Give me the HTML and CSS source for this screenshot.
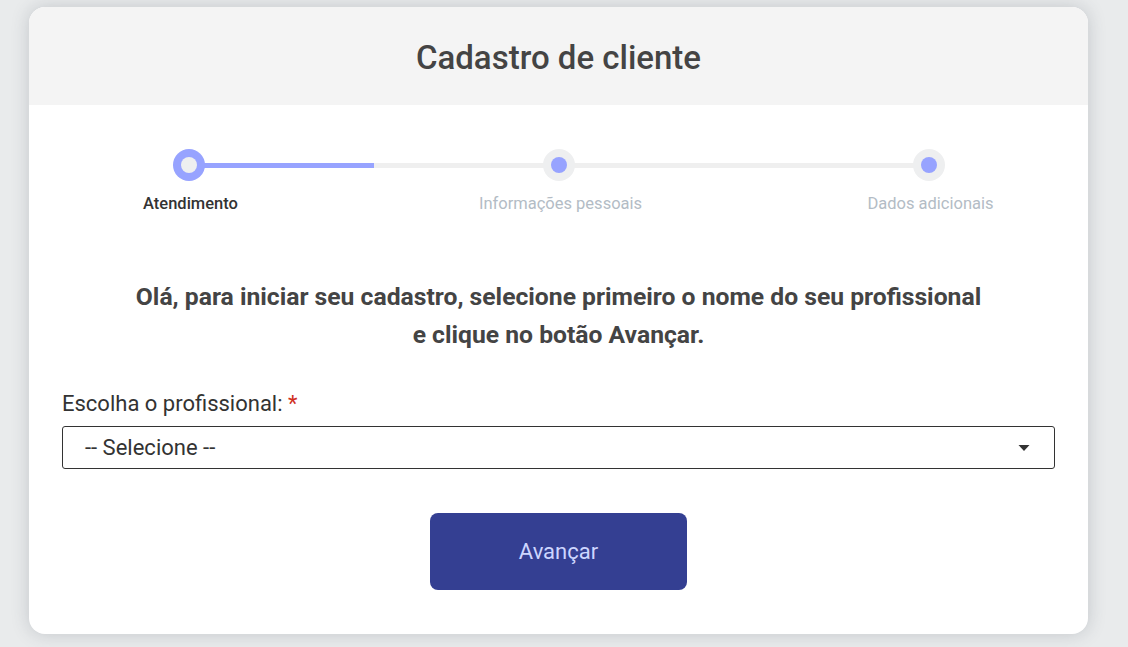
FILE: index.html
```html
<!DOCTYPE html>
<html lang="pt-BR">
<head>
<meta charset="utf-8">
<title>Cadastro de cliente</title>
<link rel="stylesheet" href="styles.css">
</head>
<body>
<div class="card">
  <div class="card-header"><h1 class="title">Cadastro de cliente</h1></div>
  <div class="card-body">
    <div class="stepper">
      <div class="track"><div class="progress"></div></div>
      <div class="step active">
        <div class="dot"><span></span></div>
        <div class="step-label">Atendimento</div>
      </div>
      <div class="step">
        <div class="dot"><span></span></div>
        <div class="step-label">Informações pessoais</div>
      </div>
      <div class="step">
        <div class="dot"><span></span></div>
        <div class="step-label">Dados adicionais</div>
      </div>
    </div>
    <p class="intro">Olá, para iniciar seu cadastro, selecione primeiro o nome do seu profissional<br>e clique no botão Avançar.</p>
    <label class="field-label">Escolha o profissional: <span class="req">*</span></label>
    <div class="select">
      <span class="select-text">-- Selecione --</span>
      <svg class="caret" width="12" height="8" viewBox="0 0 12 8"><path d="M0.5 1 L11.5 1 L6 7 Z" fill="#333"/></svg>
    </div>
    <div class="actions"><button class="btn">Avançar</button></div>
  </div>
</div>
</body>
</html>
```
FILE: styles.css
```css
* { box-sizing: border-box; }
html, body { margin: 0; padding: 0; }
body {
  background: #e9ebec;
  font-family: Roboto, "Liberation Sans", Arial, sans-serif;
  height: 647px;
  overflow: hidden;
}
.card {
  margin: 7px 0 0 29px;
  width: 1059px;
  background: #fff;
  border-radius: 16px;
  box-shadow: 0 0 18px rgba(60, 70, 80, 0.22);
  overflow: hidden;
}
.card-header {
  background: #f4f4f4;
  height: 98px;
  display: flex;
  align-items: center;
  justify-content: center;
}
.title {
  margin: 0;
  font-size: 33px;
  font-weight: 500;
  color: #444;
  padding-top: 2px;
}
.card-body {
  padding: 44px 33px 44px 33px;
}
.stepper {
  position: relative;
  width: 900px;
  margin: 0 auto;
  display: flex;
  justify-content: space-between;
}
.track {
  position: absolute;
  left: 80px;
  right: 80px;
  top: 14px;
  height: 5px;
  background: #efefef;
}
.progress {
  width: 185px;
  height: 100%;
  background: #97a3ff;
}
.step {
  position: relative;
  width: 160px;
  display: flex;
  flex-direction: column;
  align-items: center;
}
.dot {
  width: 32px;
  height: 32px;
  border-radius: 50%;
  background: #eeeff0;
  display: flex;
  align-items: center;
  justify-content: center;
}
.dot span {
  width: 16px;
  height: 16px;
  border-radius: 50%;
  background: #97a3ff;
}
.step.active .dot { background: #97a3ff; }
.step.active .dot span { background: #eeeff0; }
.step-label {
  margin-top: 13px;
  font-size: 16.5px;
  line-height: 19px;
  color: #b3bcc5;
  white-space: nowrap;
  padding-left: 4px;
}
.step.active .step-label {
  color: #333;
  font-weight: 500;
}
.intro {
  margin: 65px 0 0;
  text-align: center;
  font-size: 24.7px;
  line-height: 38px;
  font-weight: 700;
  color: #444;
}
.field-label {
  display: block;
  margin-top: 37px;
  font-size: 22px;
  line-height: 26px;
  color: #333;
}
.req { color: #d0301f; }
.select {
  margin-top: 9px;
  height: 43px;
  border: 1px solid #333;
  border-radius: 3px;
  display: flex;
  align-items: center;
  justify-content: space-between;
  padding: 0 24px 0 22px;
}
.select-text {
  font-size: 22px;
  color: #333;
}
.caret { display: block; }
.actions {
  display: flex;
  justify-content: center;
  margin-top: 44px;
}
.btn {
  width: 257px;
  height: 77px;
  border: none;
  border-radius: 8px;
  background: #343f92;
  color: #cdd6ff;
  font-family: Roboto, "Liberation Sans", Arial, sans-serif;
  font-size: 22px;
  padding: 0;
}
```
